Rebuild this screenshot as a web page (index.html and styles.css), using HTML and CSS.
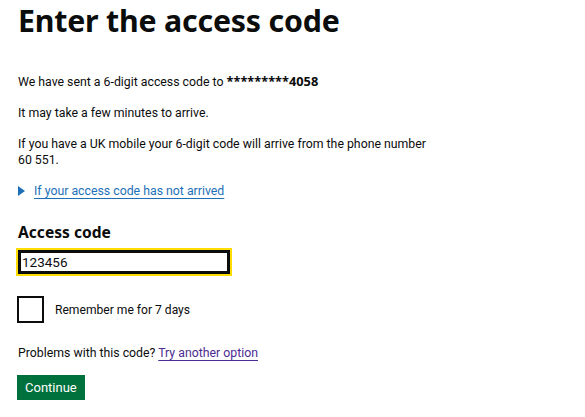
FILE: index.html
```html
<!DOCTYPE html>
<html lang="en">
<head>
<meta charset="utf-8">
<title>Enter the access code</title>
<link rel="stylesheet" href="styles.css">
</head>
<body>
<main class="page">
  <h1 class="heading">Enter the access code</h1>
  <p class="body">We have sent a 6-digit access code to <strong>*********4058</strong></p>
  <p class="body">It may take a few minutes to arrive.</p>
  <p class="body">If you have a UK mobile your 6-digit code will arrive from the phone number 60&nbsp;551.</p>
  <div class="details">
    <span class="details-arrow"></span>
    <a class="details-link" href="#">If your access code has not arrived</a>
  </div>
  <label class="label" for="code">Access code</label>
  <div class="input-wrap">
    <input class="input" id="code" type="text" value="123456">
  </div>
  <div class="checkbox-row">
    <span class="checkbox"></span>
    <span class="checkbox-label">Remember me for 7 days</span>
  </div>
  <p class="body problems">Problems with this code? <a class="link-visited" href="#">Try another option</a></p>
  <button class="button" type="button">Continue</button>
</main>
</body>
</html>
```
FILE: styles.css
```css
* { box-sizing: border-box; }
html, body { margin: 0; padding: 0; background: #fff; }
body {
  font-family: Roboto, "Noto Sans", sans-serif;
  color: #0b0c0c;
}
.page {
  padding: 0 0 0 18px;
  width: 450px;
}
.heading {
  font-family: "Noto Sans", Roboto, sans-serif;
  font-size: 30.3px;
  font-weight: 700;
  line-height: 40px;
  margin: 1px 0 33px;
  letter-spacing: -0.2px;
}
.body {
  font-size: 12.3px;
  line-height: 16px;
  margin: 0 0 15px;
}
.body strong {
  font-family: "Noto Sans", Roboto, sans-serif;
  font-weight: 700;
  font-size: 12.8px;
  line-height: 14px;
}
.details {
  display: flex;
  align-items: center;
  gap: 9px;
  margin: 14px 0 23px;
  font-size: 12.3px;
  line-height: 16px;
}
.details-arrow {
  width: 0; height: 0;
  border-left: 7px solid #1d70b8;
  border-top: 5px solid transparent;
  border-bottom: 5px solid transparent;
}
.details-link {
  color: #1d70b8;
  text-decoration: underline;
  text-underline-offset: 3px;
  text-decoration-thickness: 1px;
}
.label {
  display: block;
  font-family: "Noto Sans", Roboto, sans-serif;
  font-size: 15.6px;
  font-weight: 700;
  line-height: 20px;
  margin: 0 0 6px;
}
.input-wrap {
  width: 216px;
  margin-left: -2px;
  padding: 2px;
  background: #ffdd00;
}
.input {
  display: block;
  width: 100%;
  height: 24px;
  border: 3px solid #0b0c0c;
  padding: 0 1px;
  font-family: inherit;
  font-size: 13.5px;
  color: #0b0c0c;
  outline: none;
}
.checkbox-row {
  display: flex;
  align-items: center;
  gap: 11px;
  margin: 20px 0 22px;
}
.checkbox {
  width: 27px; height: 27px;
  border: 2px solid #0b0c0c;
  margin-left: -1px;
}
.checkbox-label { font-size: 12.1px; }
.problems { margin-bottom: 14px; }
.link-visited {
  color: #4c2c92;
  text-decoration: underline;
  text-underline-offset: 3px;
  text-decoration-thickness: 1px;
}
.button {
  display: block;
  margin-left: -1px;
  background: #00703c;
  color: #fff;
  border: 0;
  box-shadow: 0 2px 0 #002d18;
  font-family: inherit;
  font-size: 13px;
  line-height: 16px;
  padding: 5px 8px 4px;
}
```
